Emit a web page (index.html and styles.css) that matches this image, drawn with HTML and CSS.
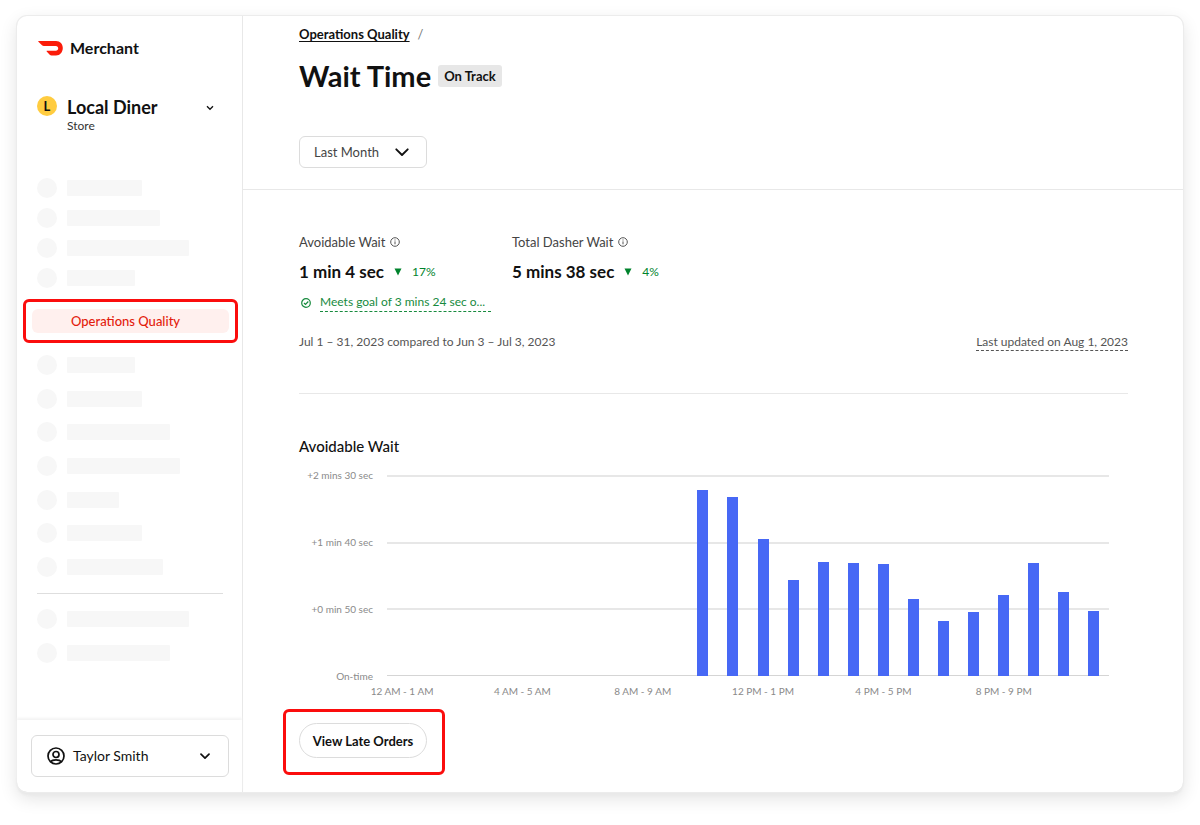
FILE: index.html
```html
<!DOCTYPE html>
<html lang="en">
<head>
<meta charset="utf-8">
<meta name="viewport" content="width=device-width, initial-scale=1">
<title>Wait Time – Merchant</title>
<link rel="stylesheet" href="styles.css">
</head>
<body>
<div class="card">
  <aside class="sidebar">
    <div class="brand">
      <svg class="brand-logo" width="25" height="15" viewBox="0 0 25 15" aria-hidden="true"><path fill="#fb1c0a" d="M.8 0H18C22.200 0 24.800 3.200 24.800 7C24.800 11 22 14.500 18 14.500H13.500C12.700 14.500 12.200 14.200 11.700 13.700L8.700 10.400C8.400 10.100 8.600 9.700 9 9.700H17.800C19.300 9.700 20.200 8.600 20.200 7.300C20.200 6 19.300 5 17.800 5H5.800C5.100 5 4.500 4.700 4 4.200L.4.700C.1.400.3 0 .8 0Z"/></svg>
      <span>Merchant</span>
    </div>
    <button class="store" type="button">
      <span class="avatar">L</span>
      <span class="store-text"><span class="store-name">Local Diner</span><span class="store-kind">Store</span></span>
      <svg class="store-chevron" width="8" height="6" viewBox="0 0 8 6" aria-hidden="true"><path d="M1 1.200 4 4.300 7 1.200" fill="none" stroke="#111" stroke-width="1.300"/></svg>
    </button>
    <nav class="nav">
      <div class="group group-top">
        <div class="ghost"><i></i><b class="w75"></b></div>
        <div class="ghost"><i></i><b class="w93"></b></div>
        <div class="ghost"><i></i><b class="w122"></b></div>
        <div class="ghost"><i></i><b class="w68"></b></div>
      </div>
      <div class="callout callout-nav"><a class="nav-active" href="#">Operations Quality</a></div>
      <div class="group group-mid">
        <div class="ghost"><i></i><b class="w68"></b></div>
        <div class="ghost"><i></i><b class="w75"></b></div>
        <div class="ghost"><i></i><b class="w103"></b></div>
        <div class="ghost"><i></i><b class="w113"></b></div>
        <div class="ghost"><i></i><b class="w52"></b></div>
        <div class="ghost"><i></i><b class="w75"></b></div>
        <div class="ghost"><i></i><b class="w96"></b></div>
      </div>
      <div class="group group-end">
        <div class="ghost"><i></i><b class="w122"></b></div>
        <div class="ghost"><i></i><b class="w103"></b></div>
      </div>
    </nav>
    <div class="account">
      <button class="user" type="button">
        <svg width="18" height="18" viewBox="0 0 18 18" fill="none" stroke="#111" stroke-width="1.700" aria-hidden="true"><circle cx="9" cy="9" r="8"/><circle cx="9" cy="7.500" r="3"/><path d="M3.600 14.800C4.800 13.200 6.700 12.800 9 12.800S13.200 13.200 14.400 14.800"/></svg>
        <span class="user-name">Taylor Smith</span>
        <svg width="10" height="7" viewBox="0 0 10 7" aria-hidden="true"><path d="M1 1.200 5 5.200 9 1.200" fill="none" stroke="#111" stroke-width="1.700" stroke-linecap="round" stroke-linejoin="round"/></svg>
      </button>
    </div>
  </aside>

  <main class="main">
    <header class="header">
      <nav class="crumbs"><a href="#">Operations Quality</a><span>/</span></nav>
      <div class="title-row"><h1>Wait Time</h1><span class="badge">On Track</span></div>
      <div class="period">
        <select aria-label="Period"><option>Last Month</option></select>
        <svg width="14" height="9" viewBox="0 0 14 9" aria-hidden="true"><path d="M1.300 1.300 7 7 12.700 1.300" fill="none" stroke="#111" stroke-width="1.900" stroke-linecap="round" stroke-linejoin="round"/></svg>
      </div>
    </header>

    <section class="body">
      <div class="metrics">
        <div class="metric">
          <div class="metric-label">Avoidable Wait
            <svg class="info" width="10" height="10" viewBox="0 0 10 10" aria-hidden="true"><circle cx="5" cy="5" r="4.300" fill="none" stroke="#555" stroke-width="1"/><path d="M5 4.400V7.300M5 2.500V3.500" stroke="#555" stroke-width="1"/></svg>
          </div>
          <div class="metric-value">1 min 4 sec
            <svg width="8" height="8" viewBox="0 0 8 8" aria-hidden="true"><path d="M.5.500H7.500L4 7.500Z" fill="#00832d"/></svg><span class="delta">17%</span>
          </div>
          <div class="goal">
            <svg width="10" height="10" viewBox="0 0 10 10" fill="none" stroke="#178a3e" stroke-width="1.200" aria-hidden="true"><circle cx="5" cy="5" r="4.300"/><path d="M3 5 4.500 6.400 7.300 3.500"/></svg>
            <a href="#">Meets goal of 3 mins 24 sec o...</a>
          </div>
        </div>
        <div class="metric">
          <div class="metric-label">Total Dasher Wait
            <svg class="info" width="10" height="10" viewBox="0 0 10 10" aria-hidden="true"><circle cx="5" cy="5" r="4.300" fill="none" stroke="#555" stroke-width="1"/><path d="M5 4.400V7.300M5 2.500V3.500" stroke="#555" stroke-width="1"/></svg>
          </div>
          <div class="metric-value">5 mins 38 sec
            <svg width="8" height="8" viewBox="0 0 8 8" aria-hidden="true"><path d="M.5.500H7.500L4 7.500Z" fill="#00832d"/></svg><span class="delta">4%</span>
          </div>
        </div>
      </div>
      <div class="dates"><span>Jul 1 – 31, 2023 compared to Jun 3 – Jul 3, 2023</span><a href="#">Last updated on Aug 1, 2023</a></div>

      <h2>Avoidable Wait</h2>
      <div class="chart">
        <div class="y-axis"><span>+2 mins 30 sec</span><span>+1 min 40 sec</span><span>+0 min 50 sec</span><span>On-time</span></div>
        <div class="grid"><i></i><i></i><i></i><i></i></div>
        <div class="bars">
          <i></i><i></i><i></i><i></i><i></i><i></i><i></i><i></i><i></i><i></i>
          <i style="height:92.5%"></i><i style="height:89%"></i><i style="height:68%"></i><i style="height:48%"></i><i style="height:56.5%"></i><i style="height:56%"></i><i style="height:55.5%"></i><i style="height:38.5%"></i><i style="height:27.5%"></i><i style="height:32%"></i><i style="height:40.5%"></i><i style="height:56%"></i><i style="height:42%"></i><i style="height:32.5%"></i>
        </div>
        <div class="x-axis"><span>12 AM - 1 AM</span><span>4 AM - 5 AM</span><span>8 AM - 9 AM</span><span>12 PM - 1 PM</span><span>4 PM - 5 PM</span><span>8 PM - 9 PM</span></div>
      </div>
      <div class="callout callout-orders"><button class="orders" type="button">View Late Orders</button></div>
    </section>
  </main>
</div>
</body>
</html>
```

FILE: styles.css
```css
* { box-sizing: border-box; }
body {
  margin: 0;
  padding: 16px 17px 33px;
  min-height: 100vh;
  display: flex;
  background: #fff;
  color: #111;
  font-family: Lato, "Liberation Sans", sans-serif;
  font-size: 13px;
  line-height: 16px;
}
button, select { font: inherit; color: inherit; background: #fff; cursor: pointer; }
a { color: inherit; text-decoration: none; }
svg { flex: none; display: block; }

.card {
  flex: 1;
  min-width: 0;
  display: flex;
  border-radius: 10px;
  box-shadow: 0 0 0 1px #ececec, 0 3px 2px #e9e9e9, 0 6px 18px rgba(0, 0, 0, 0.12);
}

/* Sidebar */
.sidebar {
  flex: none;
  width: 226px;
  display: flex;
  flex-direction: column;
  border-right: 1px solid #e8e8e8;
}
.brand {
  display: flex;
  align-items: center;
  gap: 7px;
  padding: 22px 20px 0 21px;
  font-size: 16px;
  line-height: 20px;
  font-weight: 700;
}
.store {
  display: flex;
  align-items: flex-start;
  gap: 10px;
  margin: 38px 28px 0 20px;
  padding: 0;
  border: 0;
  text-align: left;
}
.avatar {
  width: 20px;
  height: 20px;
  border-radius: 50%;
  background: #ffcc40;
  font-size: 13px;
  line-height: 20px;
  font-weight: 700;
  text-align: center;
}
.store-text { flex: 1; display: flex; flex-direction: column; }
.store-name { font-size: 18px; line-height: 22px; font-weight: 700; }
.store-kind { font-size: 12px; color: #333; }
.store-chevron { margin-top: 9px; }

.nav { padding: 44px 0 16px; }
.group { display: flex; flex-direction: column; padding: 0 20px; }
.group-top { gap: 10px; }
.group-mid { height: 222px; justify-content: space-between; margin-top: 12px; }
.group-end { gap: 14px; margin: 16px 19px 0 20px; padding: 15px 0 0; border-top: 1px solid #dedede; }
.ghost { display: flex; align-items: center; gap: 10px; height: 20px; }
.ghost i { width: 20px; height: 20px; border-radius: 50%; background: #f7f7f7; }
.ghost b { height: 16px; border-radius: 1px; background: #f7f7f7; }
.w52 { width: 52px; }
.w68 { width: 68px; }
.w75 { width: 75px; }
.w93 { width: 93px; }
.w96 { width: 96px; }
.w103 { width: 103px; }
.w113 { width: 113px; }
.w122 { width: 122px; }

.callout { border: 3px solid #fb0d0d; border-radius: 6px; }
.callout-nav { margin: 11px 4px 0 6px; padding: 7px 6px; }
.nav-active {
  display: block;
  padding: 4px 39px;
  border-radius: 6px;
  background: #fff0ee;
  color: #e31b0c;
  font-weight: 500;
}
.account {
  margin-top: auto;
  padding: 15px 13px 15px 14px;
  box-shadow: 0 -2px 3px #f3f3f3;
  border-radius: 0 0 0 10px;
}
.user {
  width: 100%;
  height: 42px;
  display: flex;
  align-items: center;
  gap: 8px;
  padding: 0 18px 0 15px;
  border: 1px solid #dcdcdc;
  border-radius: 6px;
  font-size: 14px;
}
.user-name { flex: 1; text-align: left; }

/* Main column */
.main { flex: 1; min-width: 0; }
.header { padding: 10px 56px 21px; border-bottom: 1px solid #e8e8e8; }
.crumbs { display: flex; gap: 8px; color: #777; }
.crumbs a { color: #111; font-weight: 700; text-decoration: underline; text-underline-offset: 2px; }
.title-row { display: flex; align-items: center; gap: 7px; margin-top: 16px; }
h1 { margin: 0; font-size: 29px; line-height: 36px; font-weight: 700; }
.badge {
  padding: 3px 6px;
  border-radius: 3px;
  background: #e7e7e7;
  font-weight: 700;
}
.period { display: grid; width: 128px; margin-top: 42px; align-items: center; }
.period select {
  grid-area: 1 / 1;
  appearance: none;
  height: 32px;
  padding: 0 14px;
  border: 1px solid #dcdcdc;
  border-radius: 6px;
  color: #444;
}
.period svg { grid-area: 1 / 1; justify-self: end; margin-right: 18px; pointer-events: none; }

.body { padding: 44px 55px 17px 56px; }
.metrics { display: flex; gap: 21px; }
.metric { min-width: 192px; }
.metric-label { display: flex; align-items: center; gap: 5px; color: #444; }
.metric-value { display: flex; align-items: center; gap: 10px; margin-top: 11px; font-size: 17px; line-height: 22px; font-weight: 700; }
.delta { font-size: 12px; font-weight: 400; color: #00832d; }
.goal { display: flex; align-items: center; gap: 9px; padding-left: 2px; margin-top: 10px; font-size: 12px; color: #178a3e; }
.goal a { flex: 1; border-bottom: 1px dashed; line-height: 18px; }
.dates {
  display: flex;
  justify-content: space-between;
  align-items: flex-start;
  padding-bottom: 42px;
  margin-top: 22px;
  border-bottom: 1px solid #e8e8e8;
  font-size: 12px;
  color: #555;
}
.dates a { border-bottom: 1px dashed; }
h2 { margin: 42px 0 0; font-size: 15px; line-height: 20px; font-weight: 500; }

/* Chart */
.chart {
  display: grid;
  grid-template-columns: 74px 1fr;
  grid-template-rows: 201px auto;
  column-gap: 14px;
  margin: 19px 19px 0 0;
  font-size: 10px;
  color: #8a8a8a;
}
.y-axis {
  grid-area: 1 / 1;
  display: flex;
  flex-direction: column;
  justify-content: space-between;
  align-items: flex-end;
  margin: -8px 0;
}
.grid { grid-area: 1 / 2; display: flex; flex-direction: column; justify-content: space-between; }
.grid i { height: 2px; background: #e7e7e7; }
.grid i:last-child { height: 1px; background: #d5d5d5; }
.bars { grid-area: 1 / 2; display: grid; grid-template-columns: repeat(24, 1fr); align-items: end; justify-items: center; }
.bars i { width: 11px; background: #4768f5; }
.x-axis { grid-area: 2 / 2; display: grid; grid-template-columns: repeat(6, 1fr); margin-top: 7px; }
.x-axis span { width: 25%; display: flex; justify-content: center; white-space: nowrap; }

.callout-orders { width: 162px; margin: 10px 0 0 -16px; padding: 11px 13px 14px; }
.orders {
  width: 128px;
  height: 35px;
  padding: 0;
  border: 1px solid #dcdcdc;
  border-radius: 18px;
  font-weight: 700;
}
```
